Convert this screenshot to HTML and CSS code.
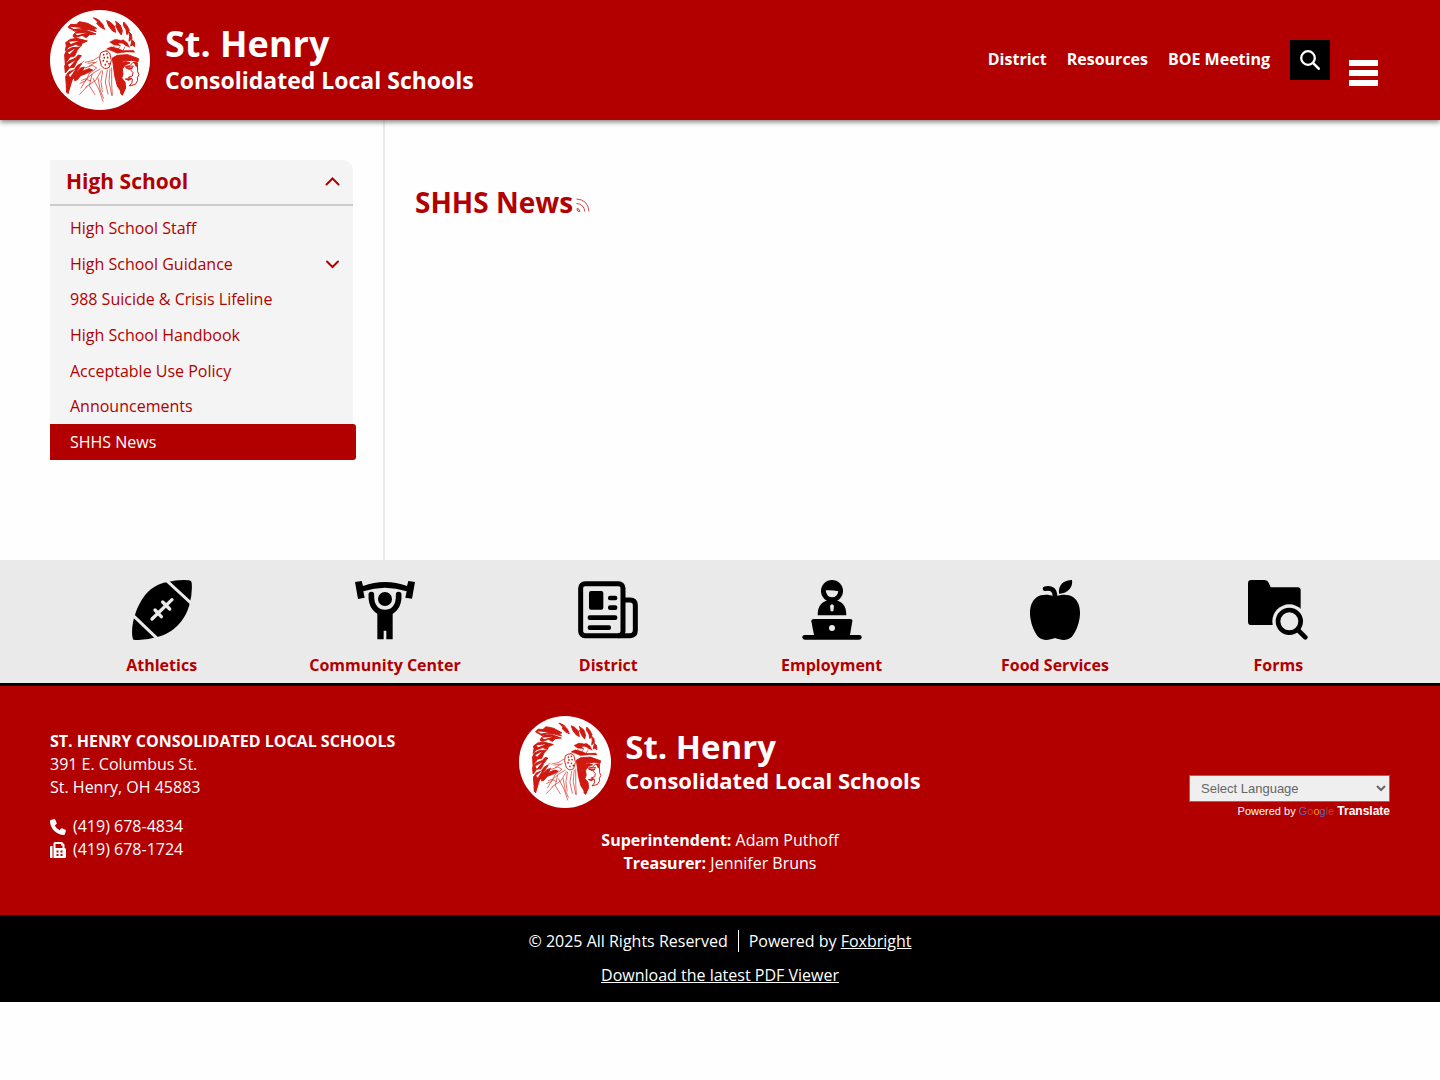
FILE: index.html
```
<!DOCTYPE html>
<html lang="en">
<head>
    <meta charset="UTF-8">
    <meta name="viewport" content="width=device-width, initial-scale=1">
    <title>SHHS News - St. Henry Consolidated Local Schools</title>
    <link rel="stylesheet" href="styles.css">
</head>
<body>
    <svg class="defs" width="0" height="0" aria-hidden="true">
        <symbol id="emblem" viewBox="30 30 300 300">
            <circle cx="180" cy="180" r="150" fill="#fff"/>
            <g fill="#d01a10" stroke="#d01a10" stroke-width="3" stroke-linejoin="round">
                <!-- feathers -->
                <path d="M84 82l8-9 16 1 10-9 25 5 27 15-9 3 8 7-24-6-24-1-16 6-10-6z"/>
                <path d="M101 103l12-11 25-1 30 11-20 2-9 9-13-7-20 7-7-4z"/>
                <path d="M77 128l14-10 20-3 31 8-16 7-3 9-16-6-21 8-10 11 3-15z"/>
                <path d="M74 164l6-13 16-8 24-2-8 9-8 18-14 3-10 14-4 9z"/>
                <path d="M74 197l12-14 20-8 9-10 9 2-13 17-9 18-14 2-12 15z"/>
                <path d="M77 229l9-13 17-7 10-13 12-5-15 22-7 20-11 9-5 20-7 16-1-20z"/>
                <path d="M80 262l8-24 12-9-7 22-9 30z"/>
                <path d="M103 224l17-19 13-4-7 13 21-8 11 4-18 10-18 7-10 12-8 3z"/>
                <path d="M160 53l15 6 13 14 6 15-12-6-12-12 4-3z"/>
                <path d="M200 62l10 4 13 12 4 19-9-4-12-15z"/>
                <path d="M227 64l14 11 6 17-3 13-8-10-9-18 3-2z"/>
                <path d="M251 66l10 11 7 14-7 13-3-15-8-13z"/>
                <path d="M266 95l8 8 2 13-9 8 2-15zM276 119l7 8 1 13-7-5-5 3z"/>
                <path d="M209 126l16-8 14 2 10 9-15 1 8 8-22-4zM238 122l12-3 12 9 7 14-12-5-12-9z" stroke-width="1"/>
                <path d="M200 146l13-6 18 4 20 8 29-1 5 6-24-1-30 4-17-8z" stroke-width="1"/>
                <!-- brow band, hair and face -->
                <path d="M217 174l15-8 31-2 33 12-2 9-19-4-26 2-9 11-5 13 1 24 11 23 1 28-16-24-8-31z"/>
                <path d="M238 188l20-3 12 4-14 6-9 12 2 17-4 10 10 12 2 18-10 22-5-6 1-30-9-25z"/>
                <path d="M256 200l14-3 9-10 13 2 1 26 4 9-5 9 1 8-7 12-18 5 8-10 1-11-12-5 12-4 2-10-7-8 8-12z" fill="none"/>
                <path d="M257 203l20 1-10 4zM256 237l18-1-8 5zM283 188h9l-3 12z"/>
            </g>
            <g fill="#fff">
                <path d="M90 80l35 4-24 3zM105 101l34-3-27 8zM87 125l29-2-24 9zM83 158l22-12-16 17zM84 194l22-13-18 21zM86 225l20-17-15 23z"/>
            </g>
            <g fill="none" stroke="#d01a10" stroke-width="2" stroke-linecap="round">
                <path d="M182 159q16-12 27 0l5 22-6 21q-16 9-24-5l-5-20z" stroke-width="3"/>
                <path d="M191 164v1M201 161v1M193 173v1M203 172v1M190 182v1M201 184v1M196 194v1M207 191v1" stroke-width="5"/>
                <path d="M176 171l-16 10-24 6M171 185l-22 12M197 152l22-9 24 9 38 2M211 151l13-14M228 156l12-16M247 155l8-14"/>
                <path d="M180 207l-20 12-21 18-16 27M184 212l-17 29-30 20M188 213l-5 31 4 31M202 210l-6 36 8 36M210 207l-3 37 8 42M215 203v50l2 33"/>
                <path d="M151 214l-13 28-18 8M159 235l18 34 12 35M156 223l-8 34 17 27M174 234l7 39 10 22M119 283l21-22M142 239l10 4M125 241l13-5"/>
                <path d="M135 204l22-8 13 8-21 16M144 190l20-3M117 194l15-10"/>
            </g>
        </symbol>
    </svg>

    <header class="site-header">
        <a class="brand" href="#">
            <svg class="brand-logo" aria-hidden="true"><use href="#emblem"/></svg>
            <span class="brand-text">
                <span class="brand-name">St. Henry</span>
                <span class="brand-sub">Consolidated Local Schools</span>
            </span>
        </a>
        <nav class="top-nav" aria-label="Main">
            <a href="#">District</a>
            <a href="#">Resources</a>
            <a href="#">BOE Meeting</a>
        </nav>
        <button class="search-btn" type="button" aria-label="Search">
            <svg viewBox="0 0 20 20" width="20" height="20" fill="none" stroke="#fff" stroke-linecap="round">
                <circle cx="8" cy="8" r="6.8" stroke-width="2.3"/>
                <path d="M13.2 13.2L18.7 18.7" stroke-width="2.6"/>
            </svg>
        </button>
        <button class="menu-btn" type="button" aria-label="Menu">
            <span></span>
            <span></span>
            <span></span>
        </button>
    </header>

    <div class="page">
        <aside class="sidebar">
            <nav class="side-nav" aria-label="High School">
                <div class="side-title">
                    <a href="#">High School</a>
                    <button type="button" aria-label="Collapse High School">
                        <svg viewBox="0 0 15 9" width="15" height="9"><path d="M1.5 7.5l6-6 6 6"/></svg>
                    </button>
                </div>
                <ul>
                    <li><a href="#">High School Staff</a></li>
                    <li>
                        <a href="#">High School Guidance</a>
                        <button type="button" aria-label="Expand High School Guidance">
                            <svg viewBox="0 0 15 9" width="15" height="9"><path d="M2 1.5l5.500 5.500 5.500-5.500"/></svg>
                        </button>
                    </li>
                    <li><a href="#">988 Suicide &amp; Crisis Lifeline</a></li>
                    <li><a href="#">High School Handbook</a></li>
                    <li><a href="#">Acceptable Use Policy</a></li>
                    <li><a href="#">Announcements</a></li>
                    <li class="current"><a href="#" aria-current="page">SHHS News</a></li>
                </ul>
            </nav>
        </aside>
        <main class="content">
            <h1>SHHS News</h1>
            <a class="rss" href="#" aria-label="RSS feed">
                <svg viewBox="0 0 14 14" width="14" height="14" fill="none" stroke="#b20000" stroke-width=".7">
                    <path d="M.5 1Q12 1.500 13 13.500M.5 5.500Q8 6 8.800 13.500"/>
                    <path d="M1 10.500Q3.500 10.500 4 13.500L1.500 13Z"/>
                </svg>
            </a>
        </main>
    </div>

    <nav class="quick-links" aria-label="Quick links">
        <a href="#">
            <svg viewBox="0 0 180 180" aria-hidden="true">
                <path d="M4 179C-3 165 0 130 9 105C25 55 55 15 104 7Q140-2 170 1Q178 1 179 9Q182 40 172 75C160 120 125 160 75 171Q40 182 4 179Z"/>
                <path class="cut" d="M3 106L76 176M104 2L178 70" stroke-width="9"/>
                <path class="cut" d="M60 117L120 59M69 90L88 110M92 66L113 87" stroke-width="10" stroke-linecap="round"/>
            </svg>
            Athletics
        </a>
        <a href="#">
            <svg viewBox="0 0 180 180" aria-hidden="true">
                <path d="M0 6L20 3L24 18Q90-6 156 18L160 3L180 6L171 56L151 53L155 34Q90 12 25 34L29 53L9 57Z"/>
                <circle cx="90" cy="57" r="21"/>
                <path d="M49 44C47 82 68 98 90 98C112 98 133 82 131 44" fill="none" stroke="#000" stroke-width="17" stroke-linecap="round"/>
                <path d="M67 92H113V178H94V152H86V178H67Z"/>
            </svg>
            Community Center
        </a>
        <a href="#">
            <svg viewBox="0 0 180 180" aria-hidden="true">
                <g fill="none" stroke="#000" stroke-width="15">
                    <rect x="8" y="11" width="127" height="156" rx="13"/>
                    <path d="M135 60H156Q172 60 172 76V151Q172 167 156 167H120"/>
                </g>
                <rect x="33" y="33" width="43" height="56" rx="6"/>
                <rect x="90" y="47" width="28" height="14" rx="6"/>
                <rect x="90" y="76" width="28" height="14" rx="6"/>
                <rect x="29" y="106" width="89" height="14" rx="6"/>
                <rect x="29" y="136" width="70" height="14" rx="6"/>
            </svg>
            District
        </a>
        <a href="#">
            <svg viewBox="0 0 180 180" aria-hidden="true">
                <circle cx="90" cy="33" r="33"/>
                <path d="M47 106Q47 60 90 60Q133 60 133 106Z"/>
                <path class="light" d="M71 31Q90 29 109 34Q106 52 90 52Q74 52 71 31ZM84 77L90 72L96 77L94 94H86Z"/>
                <path d="M28 124Q28 117 36 117H144Q152 117 151 124L143 170H37Z"/>
                <rect x="1" y="165" width="178" height="14" rx="7"/>
                <circle class="light" cx="90" cy="144" r="9"/>
            </svg>
            Employment
        </a>
        <a href="#">
            <svg viewBox="0 0 180 180" aria-hidden="true">
                <path d="M90 50C110 42 130 42 144 51C180 76 164 144 139 172C124 184 107 180 90 174C73 180 56 184 41 172C16 144 0 76 36 51C50 42 70 42 90 50Z"/>
                <path d="M60 26Q90 20 90 50" fill="none" stroke="#000" stroke-width="14" stroke-linecap="round"/>
                <path d="M102 41C99 15 116 0 141 0C145 20 128 42 102 41Z"/>
            </svg>
            Food Services
        </a>
        <a href="#">
            <svg viewBox="0 0 180 180" aria-hidden="true">
                <path d="M0 10Q0 0 10 0H50Q59 0 62 8L68 22H149Q158 22 158 31V135H10Q0 135 0 125Z"/>
                <circle class="light" cx="124" cy="124" r="51"/>
                <circle cx="124" cy="124" r="34" fill="none" stroke="#000" stroke-width="14"/>
                <path d="M150 150L172 172" stroke="#000" stroke-width="14" stroke-linecap="round"/>
            </svg>
            Forms
        </a>
    </nav>

    <footer>
        <div class="footer-main">
            <address>
                <strong>ST. HENRY CONSOLIDATED LOCAL SCHOOLS</strong><br>
                391 E. Columbus St.<br>
                St. Henry, OH 45883
                <div class="phones">
                    <div>
                        <svg viewBox="0 0 16 16" width="16" height="16" fill="#fff" aria-hidden="true"><path d="M1 1L4.200.100Q5 0 5.300.700L6.700 4Q6.900 4.700 6.300 5.200L4.800 6.400Q6.200 9.500 9.600 11.200L10.800 9.700Q11.300 9.100 12 9.300L15.300 10.700Q16 11 15.900 11.800L15 15Q14.800 16 14 16C6.500 16 0 9.500 0 2Q0 1.200 1 1Z"/></svg>
                        (419) 678-4834
                    </div>
                    <div>
                        <svg viewBox="0 0 16 16" width="16" height="16" fill="#fff" aria-hidden="true">
                            <path d="M0 5Q0 4 1 4H2.500V16H1Q0 16 0 15ZM3.500 16V1.500Q3.500 0 5 0H12L14.500 2.500V6Q16 6.200 16 7.500V14.500Q16 16 14.500 16ZM5.500 2V6H12.500V3.500H11V2Z" fill-rule="evenodd"/>
                            <path d="M6.500 8.500h2v2h-2zM10.500 8.500h2v2h-2zM6.500 12h2v2h-2zM10.500 12h2v2h-2z" fill="#b20000"/>
                        </svg>
                        (419) 678-1724
                    </div>
                </div>
            </address>
            <div class="footer-center">
                <a class="brand brand-small" href="#">
                    <svg class="brand-logo" aria-hidden="true"><use href="#emblem"/></svg>
                    <span class="brand-text">
                        <span class="brand-name">St. Henry</span>
                        <span class="brand-sub">Consolidated Local Schools</span>
                    </span>
                </a>
                <p>
                    <strong>Superintendent:</strong> Adam Puthoff<br>
                    <strong>Treasurer:</strong> Jennifer Bruns
                </p>
            </div>
            <div class="translate">
                <select aria-label="Select Language">
                    <option>Select Language</option>
                </select>
                <div class="powered">
                    Powered by
                    <a href="#"><span class="google"><i class="g-blue">G</i><i class="g-red">o</i><i class="g-yellow">o</i><i class="g-blue">g</i><i class="g-green">l</i><i class="g-red">e</i></span> <b>Translate</b></a>
                </div>
            </div>
        </div>
        <div class="footer-bottom">
            <p><span class="copyright">© 2025 All Rights Reserved</span><span class="credit">Powered by <a href="#">Foxbright</a></span></p>
            <p><a href="#">Download the latest PDF Viewer</a></p>
        </div>
    </footer>
</body>
</html>
```

FILE: styles.css
```
* {
    box-sizing: border-box;
}

body {
    margin: 0;
    background: #fefefe;
    color: #000;
    font-family: "Open Sans", "Noto Sans", sans-serif;
    font-size: 16px;
}

a {
    color: #b20000;
    text-decoration: none;
}

button {
    border: 0;
    padding: 0;
    background: none;
    cursor: pointer;
}

svg {
    display: block;
}

.defs {
    position: absolute;
}

/* header */
.site-header {
    position: relative;
    display: flex;
    align-items: center;
    padding: 10px 62px 10px 50px;
    background: #b20000;
    box-shadow: 0 2px 5px rgba(0, 0, 0, 0.5);
}

.brand {
    display: flex;
    align-items: center;
    gap: 15px;
    color: #fff;
    font-weight: bold;
}

.brand-logo {
    width: 100px;
    height: 100px;
}

.brand-text {
    padding-bottom: 2px;
}

.brand-name,
.brand-sub {
    display: block;
    white-space: nowrap;
}

.brand-name {
    font-size: 36px;
    line-height: 42px;
}

.brand-sub {
    font-size: 23px;
    line-height: 30px;
}

.top-nav {
    display: flex;
    gap: 20px;
    margin-left: auto;
    padding-bottom: 2px;
}

.top-nav a {
    color: #fff;
    font-weight: bold;
}

.search-btn {
    display: flex;
    align-items: center;
    justify-content: center;
    width: 40px;
    height: 40px;
    margin: 0 19px 0 20px;
    background: #000;
}

.menu-btn {
    display: grid;
    gap: 4px;
    width: 29px;
    padding-top: 25px;
}

.menu-btn span {
    height: 6px;
    background: #fff;
}

/* page */
.page {
    display: flex;
    padding: 0 50px;
}

.sidebar {
    flex: 0 0 25%;
    padding: 40px 30px 100px 0;
    border-right: 2px solid #e9e9e9;
}

.side-nav {
    background: #f4f4f4;
    border-radius: 0 10px 0 0;
}

.side-nav svg {
    fill: none;
    stroke: #b20000;
    stroke-width: 2;
    stroke-linecap: round;
}

.side-title {
    display: flex;
    align-items: center;
    justify-content: space-between;
    padding: 6px 13px 8px 16px;
    border-bottom: 2px solid #ccc;
    font-size: 21px;
    font-weight: bold;
    line-height: 30px;
}

.side-nav ul {
    display: grid;
    grid-auto-rows: 1fr;
    min-height: 254px;
    margin: 0;
    padding: 5px 0 0;
    list-style: none;
}

.side-nav li {
    display: flex;
    align-items: center;
    justify-content: space-between;
    padding: 5px 13px 5px 20px;
    line-height: 25px;
}

.side-nav .current {
    margin-right: -3px;
    background: #b20000;
    border-radius: 0 3px 3px 0;
}

.current a {
    color: #fff;
}

.content {
    flex: 1;
    display: flex;
    align-items: flex-start;
    gap: 3px;
    padding: 62px 0 0 30px;
}

.content h1 {
    margin: 0;
    color: #b20000;
    font-size: 28px;
    line-height: 40px;
}

.rss {
    padding-top: 16px;
}

/* quick links */
.quick-links {
    display: grid;
    grid-template-columns: repeat(6, 1fr);
    padding: 20px 50px 6px;
    background: #eaeaea;
    border-bottom: 3px solid #000;
}

.quick-links a {
    display: flex;
    flex-direction: column;
    align-items: center;
    gap: 13px;
    font-weight: bold;
    line-height: 24px;
}

.quick-links svg {
    width: 60px;
    height: 60px;
}

.quick-links .cut {
    fill: none;
    stroke: #eaeaea;
}

.quick-links .light {
    fill: #eaeaea;
}

/* footer */
footer {
    color: #fff;
    line-height: 23px;
}

.footer-main {
    display: grid;
    grid-template-columns: 1fr auto 1fr;
    align-items: center;
    padding: 30px 50px 40px;
    background: #b20000;
}

address {
    font-style: normal;
}

.phones {
    margin-top: 16px;
}

.phones div {
    display: flex;
    align-items: center;
    gap: 7px;
}

.footer-center {
    text-align: center;
}

.footer-center p {
    margin: 21px 0 0;
}

.brand-small {
    gap: 14px;
    text-align: left;
}

.brand-small .brand-logo {
    width: 92px;
    height: 92px;
}

.brand-small .brand-name {
    font-size: 33px;
    line-height: 38px;
}

.brand-small .brand-sub {
    font-size: 22px;
    line-height: 28px;
}

.translate {
    justify-self: end;
    width: 201px;
    padding-top: 4px;
    font-family: "Liberation Sans", Arial, sans-serif;
    font-size: 11px;
    text-align: right;
}

.translate select {
    display: block;
    width: 100%;
    height: 27px;
    padding: 0 0 0 7px;
    border: 1px solid #767676;
    border-radius: 0;
    background-color: #efefef;
    color: #666;
    font-family: inherit;
    font-size: 13px;
}

.powered {
    line-height: 19px;
    white-space: nowrap;
}

.powered a {
    color: #fff;
}

.powered b {
    font-size: 12px;
}

.google i {
    font-style: normal;
}

.g-blue {
    color: #5a62c8;
}

.g-red {
    color: #d03a30;
}

.g-yellow {
    color: #f29900;
}

.g-green {
    color: #6b5a2a;
}

.footer-bottom {
    padding: 15px 50px;
    background: #000;
    text-align: center;
}

.footer-bottom p {
    margin: 0 0 11px;
}

.footer-bottom p:last-child {
    margin: 0;
}

.footer-bottom a {
    color: #fff;
    text-decoration: underline;
}

.copyright {
    padding-right: 10px;
    border-right: 1px solid #fff;
}

.credit {
    padding-left: 10px;
}
```
